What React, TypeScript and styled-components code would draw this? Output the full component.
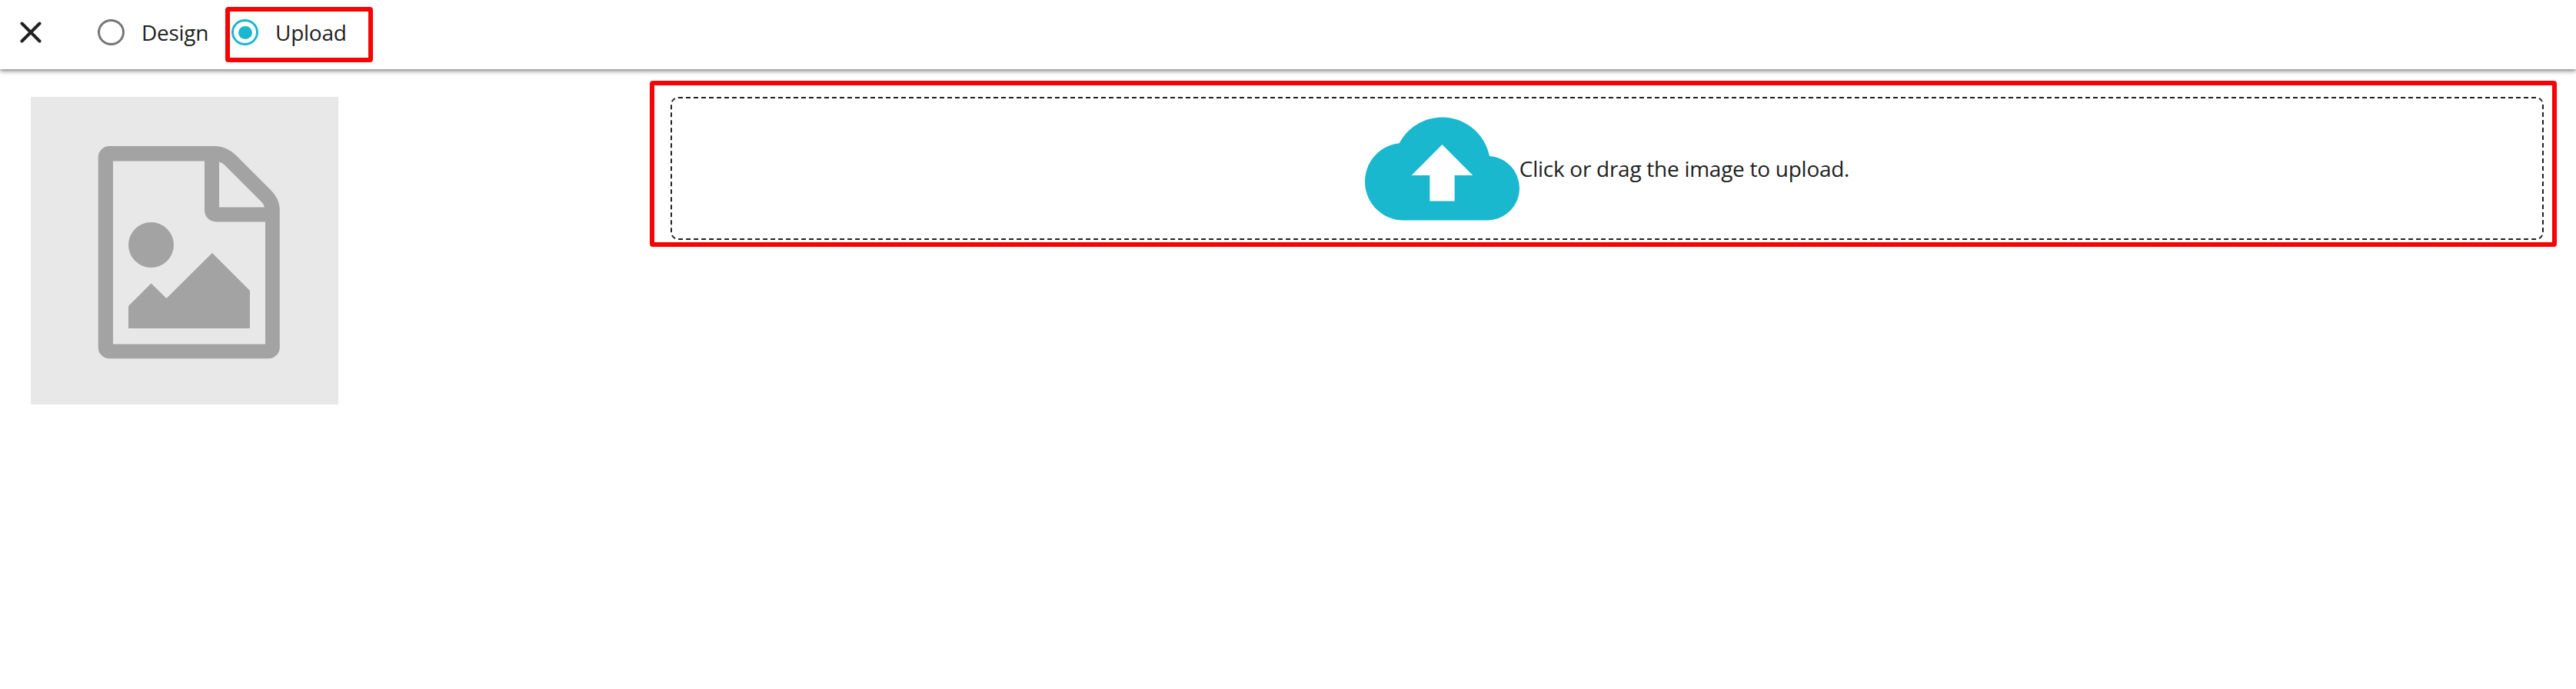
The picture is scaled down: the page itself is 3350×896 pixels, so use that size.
import React, { useState } from 'react';
import styled, { createGlobalStyle } from 'styled-components';

const GlobalStyle = createGlobalStyle`
  * { box-sizing: border-box; }
  body {
    margin: 0;
    background: #fff;
    color: #212121;
    font-family: 'Open Sans', 'Noto Sans', sans-serif;
    font-size: 28px;
    line-height: 42px;
    letter-spacing: -0.27px;
  }
`;

const Page = styled.div`
  min-height: 896px;
  display: flex;
  flex-direction: column;
`;

const Toolbar = styled.header`
  display: flex;
  align-items: flex-start;
  height: 90px;
  padding: 9px 0 0 24px;
  box-shadow: 0 2px 6px rgba(0, 0, 0, 0.54);
`;

const CloseButton = styled.button`
  display: flex;
  margin: 17px 0 0 2px;
  padding: 0;
  border: 0;
  background: none;
  color: inherit;
`;

const Options = styled.div`
  display: flex;
  margin-left: 67px;
`;

const Option = styled.label<{ $marked?: boolean }>`
  display: flex;
  align-items: center;
  height: 72px;
  padding: 0 0 6px 0;
  border: 6px solid ${(p) => (p.$marked ? '#f60404' : 'transparent')};
  border-radius: 4px;
  ${(p) => (p.$marked ? 'width: 192px; padding-left: 2px;' : 'width: 172px;')}
`;

const Ring = styled.span<{ $on: boolean }>`
  display: flex;
  align-items: center;
  justify-content: center;
  width: 35px;
  height: 34px;
  margin-right: 22px;
  flex: none;
  border: 3px solid ${(p) => (p.$on ? '#19b8cf' : '#757575')};
  border-radius: 50%;

  &::after {
    content: '';
    width: 18px;
    height: 17px;
    border-radius: 50%;
    background: ${(p) => (p.$on ? '#19b8cf' : 'transparent')};
  }
`;

const HiddenInput = styled.input`
  display: none;
`;

const Content = styled.main`
  display: flex;
  align-items: flex-start;
  padding: 15px 25px 0 40px;
`;

const Preview = styled.div`
  width: 400px;
  height: 400px;
  margin: 21px 405px 0 0;
  flex: none;
  background: #e8e8e8;
`;

const Highlight = styled.section`
  flex: 1;
  height: 216px;
  padding: 15px 11px 0 21px;
  border: 6px solid #f60404;
  border-radius: 4px;
`;

const DropZone = styled.div`
  display: flex;
  align-items: center;
  justify-content: center;
  height: 186px;
  border: 2px dashed #212121;
  border-radius: 10px;
`;

const DropText = styled.span`
  white-space: nowrap;
`;

const CloudIcon = styled.svg`
  width: 201px;
  height: 201px;
  flex: none;
  fill: #19b8cf;
`;

const modes = ['Design', 'Upload'];

export default function App() {
  const [mode, setMode] = useState('Upload');
  return (
    <Page>
      <GlobalStyle />
      <Toolbar>
        <CloseButton aria-label="Close">
          <svg width="28" height="32" viewBox="0 0 28 32" fill="none" stroke="currentColor" strokeWidth="4" strokeLinecap="round">
            <path d="M2.5 4.5L25.5 27.5M25.5 4.5L2.5 27.5" />
          </svg>
        </CloseButton>
        <Options>
          {modes.map((name) => (
            <Option key={name} $marked={name === 'Upload'}>
              <HiddenInput type="radio" name="mode" checked={mode === name} onChange={() => setMode(name)} />
              <Ring $on={mode === name} />
              {name}
            </Option>
          ))}
        </Options>
      </Toolbar>
      <Content>
        <Preview>
          <svg width="400" height="400" viewBox="0 0 400 400" fill="#a3a3a3">
            <path
              fillRule="evenodd"
              d="M102.200 64H241Q255 64.500 267 76L312 121Q323.800 133 323.800 147V326A14.500 14.500 0 0 1 309.300 340.300H102.200A14.500 14.500 0 0 1 87.700 326V78.500A14.500 14.500 0 0 1 102.200 64ZM107 83.500V321.500H305V162.500H241A15 15 0 0 1 226 147.500V83.500ZM245 84.500V143.500H304Q303 139.500 300.500 137L252 88.500Q249 85.500 245 84.500Z"
            />
            <circle cx="156.500" cy="192.500" r="29.500" />
            <path d="M127 272L156.500 242.500L176.500 262L236 203L285 252V301H127Z" />
          </svg>
        </Preview>
        <Highlight>
          <DropZone>
            <CloudIcon viewBox="0 0 24 24">
              <path d="M19.350 10.040C18.670 6.590 15.640 4 12 4 9.110 4 6.600 5.640 5.350 8.040 2.340 8.360 0 10.910 0 14c0 3.310 2.690 6 6 6h13c2.760 0 5-2.240 5-5 0-2.640-2.050-4.780-4.650-4.960zM13.930 13v4h-3.860v-4H7.250L12 8.250 16.750 13H13.930z" />
            </CloudIcon>
            <DropText>Click or drag the image to upload.</DropText>
          </DropZone>
        </Highlight>
      </Content>
    </Page>
  );
}
